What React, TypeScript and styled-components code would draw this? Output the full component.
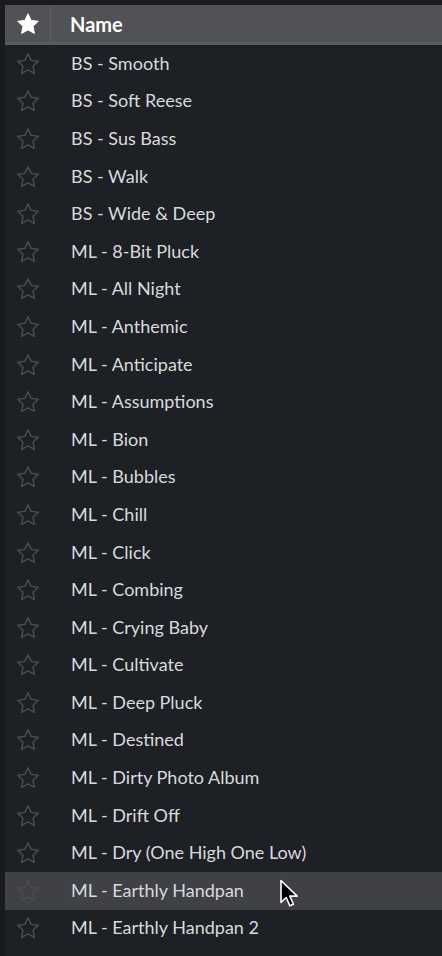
import React from "react";
import styled, { createGlobalStyle } from "styled-components";

const GlobalStyle = createGlobalStyle`
  html, body {
    margin: 0;
    padding: 0;
    background: #1c1e22;
    font-family: Lato, "Open Sans", sans-serif;
  }
`;

const presets = [
  "BS - Smooth",
  "BS - Soft Reese",
  "BS - Sus Bass",
  "BS - Walk",
  "BS - Wide & Deep",
  "ML - 8-Bit Pluck",
  "ML - All Night",
  "ML - Anthemic",
  "ML - Anticipate",
  "ML - Assumptions",
  "ML - Bion",
  "ML - Bubbles",
  "ML - Chill",
  "ML - Click",
  "ML - Combing",
  "ML - Crying Baby",
  "ML - Cultivate",
  "ML - Deep Pluck",
  "ML - Destined",
  "ML - Dirty Photo Album",
  "ML - Drift Off",
  "ML - Dry (One High One Low)",
  "ML - Earthly Handpan",
  "ML - Earthly Handpan 2",
];

const HOVERED = 22;

const Frame = styled.div`
  width: 442px;
  height: 956px;
  overflow: hidden;
  background: #1a1b1f;
  padding: 5px 0 0 5px;
  box-sizing: border-box;
`;

const Table = styled.div`
  background: #1d2025;
  height: 100%;
  display: flex;
  flex-direction: column;
`;

const Header = styled.div`
  display: flex;
  align-items: center;
  height: 40px;
  box-sizing: border-box;
  background: #505256;
  border-bottom: 3px solid #595b5f;
`;

const StarCell = styled.div`
  width: 45px;
  height: 100%;
  display: flex;
  align-items: center;
  justify-content: center;
  flex-shrink: 0;
`;

const HeaderStarCell = styled(StarCell)`
  border-right: 1px solid #5e6064;
`;

const HeaderLabel = styled.div`
  padding-left: 19px;
  color: #ffffff;
  font-size: 20px;
  font-weight: 700;
`;

const Row = styled.div<{ $hover?: boolean }>`
  position: relative;
  display: flex;
  align-items: center;
  height: 37.6px;
  flex-shrink: 0;
  background: ${({ $hover }) => ($hover ? "#3f4147" : "transparent")};
`;

const RowLabel = styled.div`
  padding-left: 21px;
  padding-bottom: 2px;
  color: #d9dadc;
  font-size: 18px;
  white-space: nowrap;
`;

const Cursor = styled.svg`
  position: absolute;
  left: 274px;
  top: 7px;
  width: 22px;
  height: 30px;
`;

const Star = ({ filled }: { filled?: boolean }) => (
  <svg width="24" height="24" viewBox="0 0 24 24">
    <path
      d="M12 1.8l3.1 6.6 7.2.9-5.3 5 1.4 7.1L12 17.9l-6.4 3.5 1.4-7.1-5.3-5 7.2-.9z"
      fill={filled ? "#ffffff" : "none"}
      stroke={filled ? "#ffffff" : "#4b4d52"}
      strokeWidth={filled ? 1 : 1.4}
      strokeLinejoin="round"
    />
  </svg>
);

export default function App() {
  return (
    <>
      <GlobalStyle />
      <Frame>
        <Table>
          <Header>
            <HeaderStarCell>
              <Star filled />
            </HeaderStarCell>
            <HeaderLabel>Name</HeaderLabel>
          </Header>
          {presets.map((name, i) => (
            <Row key={name} $hover={i === HOVERED}>
              <StarCell>
                <Star />
              </StarCell>
              <RowLabel>{name}</RowLabel>
              {i === HOVERED && (
                <Cursor viewBox="0 0 22 30">
                  <path
                    d="M2 1.5v22l5.2-5 3.6 8.3 3.6-1.6-3.5-8.1h7.3z"
                    fill="#000000"
                    stroke="#ffffff"
                    strokeWidth="1.6"
                    strokeLinejoin="round"
                  />
                </Cursor>
              )}
            </Row>
          ))}
        </Table>
      </Frame>
    </>
  );
}
